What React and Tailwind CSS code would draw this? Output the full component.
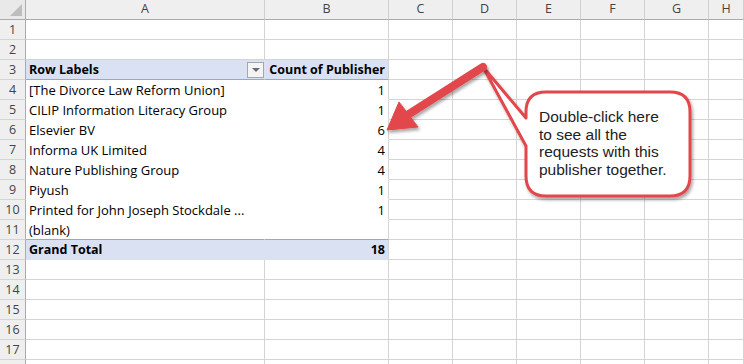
import React from 'react';

const cols = ['A', 'B', 'C', 'D', 'E', 'F', 'G', 'H'];

const pivot = {
  3: { a: 'Row Labels', b: 'Count of Publisher', kind: 'head' },
  4: { a: '[The Divorce Law Reform Union]', b: '1' },
  5: { a: 'CILIP Information Literacy Group', b: '1' },
  6: { a: 'Elsevier BV', b: '6' },
  7: { a: 'Informa UK Limited', b: '4' },
  8: { a: 'Nature Publishing Group', b: '4' },
  9: { a: 'Piyush', b: '1' },
  10: { a: 'Printed for John Joseph Stockdale ...', b: '1' },
  11: { a: '(blank)', b: '', kind: 'last' },
  12: { a: 'Grand Total', b: '18', kind: 'total' },
};

// row 18 only peeks in at the bottom edge, its number sits below the fold
const rows = Array.from({ length: 18 }, (_, i) => i + 1);

const cellA = (kind) => {
  if (kind === 'head') return 'bg-[#d9e1f2] border-r-[#d9e1f2] border-b-[#8ea9db] font-bold text-[12.5px]';
  if (kind === 'total') return 'bg-[#d9e1f2] border-r-[#d9e1f2] border-b-[#d9e1f2] font-bold text-[12.5px]';
  if (kind === 'last') return 'border-r-white border-b-[#8ea9db] text-[13px]';
  return 'border-r-white border-b-white text-[13px]';
};

const cellB = (kind) => {
  if (kind === 'head') return 'bg-[#d9e1f2] border-r-[#d4d4d4] border-b-[#8ea9db] font-bold text-[12.5px]';
  if (kind === 'total') return 'bg-[#d9e1f2] border-r-[#d4d4d4] border-b-[#d9e1f2] font-bold text-[12.5px]';
  if (kind === 'last') return 'border-r-[#d4d4d4] border-b-[#8ea9db] text-[13px]';
  return 'border-r-[#d4d4d4] border-b-white text-[13px]';
};

const Annotation = () => (
  <svg className="absolute left-0 top-0 pointer-events-none" width="744" height="364" viewBox="0 0 744 364">
    <defs>
      <filter id="shadow" x="-20%" y="-20%" width="140%" height="140%">
        <feDropShadow dx="1.5" dy="2.5" stdDeviation="1.8" floodColor="#000" floodOpacity="0.35" />
      </filter>
    </defs>
    {/* callout with tail */}
    <path
      d="M 526 118 L 483 67 L 526 146 L 526 176 Q 526 196 546 196 L 670 196 Q 690 196 690 176 L 690 112 Q 690 92 670 92 L 546 92 Q 526 92 526 112 Z"
      fill="#fff"
      stroke="#e2474b"
      strokeWidth="3"
      strokeLinejoin="round"
      filter="url(#shadow)"
    />
    {/* arrow */}
    <g filter="url(#shadow)">
      <line x1="483" y1="67" x2="409" y2="114" stroke="#e2474b" strokeWidth="8" strokeLinecap="round" />
      <polygon points="387,130 399,102 418,127" fill="#e2474b" stroke="#e2474b" strokeWidth="1" strokeLinejoin="round" />
    </g>
  </svg>
);

export default function App() {
  return (
    <div className="relative w-[744px] h-[364px] overflow-hidden bg-white font-['Open_Sans',sans-serif] text-[12.5px]">
      <div className="grid grid-cols-[26px_239px_124px_64px_64px_64px_64px_64px_1fr] auto-rows-[20px]">
        {/* column headers */}
        <div className="relative bg-[#e9e9e9] border-r border-b border-r-[#ababab] border-b-[#ababab]">
          <div className="absolute right-[3px] bottom-[3px] w-0 h-0 border-l-[12px] border-l-transparent border-b-[12px] border-b-[#bdbdbd]" />
        </div>
        {cols.map((c) => (
          <div
            key={c}
            className="flex items-center justify-center bg-[#efefef] border-r border-b border-r-[#d0d0d0] border-b-[#ababab] text-[#444]"
          >
            {c}
          </div>
        ))}

        {rows.map((r) => {
          const p = pivot[r];
          return (
            <React.Fragment key={r}>
              <div className="flex items-end justify-center pb-[1px] leading-[16px] bg-[#efefef] border-r border-b border-r-[#ababab] border-b-[#d4d4d4] text-[#444]">
                {r < 18 ? r : ''}
              </div>
              {p ? (
                <>
                  <div className={`flex items-end justify-between pl-[3px] pb-[1px] leading-[16px] border-r border-b text-black whitespace-nowrap ${cellA(p.kind)}`}>
                    <span>{p.a}</span>
                    {p.kind === 'head' && (
                      <span className="flex items-center justify-center w-[17px] h-[16px] border border-[#a6a6a6] bg-[#f4f4f4]">
                        <span className="w-0 h-0 border-l-[4px] border-r-[4px] border-t-[4px] border-l-transparent border-r-transparent border-t-[#6b6b6b]" />
                      </span>
                    )}
                  </div>
                  <div className={`flex items-end justify-end pr-[3px] pb-[1px] leading-[16px] border-r border-b text-black whitespace-nowrap ${cellB(p.kind)}`}>
                    {p.b}
                  </div>
                </>
              ) : (
                <>
                  <div className="border-r border-b border-r-[#d4d4d4] border-b-[#d4d4d4]" />
                  <div className="border-r border-b border-r-[#d4d4d4] border-b-[#d4d4d4]" />
                </>
              )}
              {cols.slice(2).map((c) => (
                <div key={c} className="border-r border-b border-r-[#d4d4d4] border-b-[#d4d4d4]" />
              ))}
            </React.Fragment>
          );
        })}
      </div>

      <Annotation />

      <div className="absolute left-[539px] top-[108px] font-['Liberation_Sans',Arial,sans-serif] text-[15.5px] leading-[17.7px] text-[#222]">
        Double-click here
        <br />
        to see all the
        <br />
        requests with this
        <br />
        publisher together.
      </div>
    </div>
  );
}
